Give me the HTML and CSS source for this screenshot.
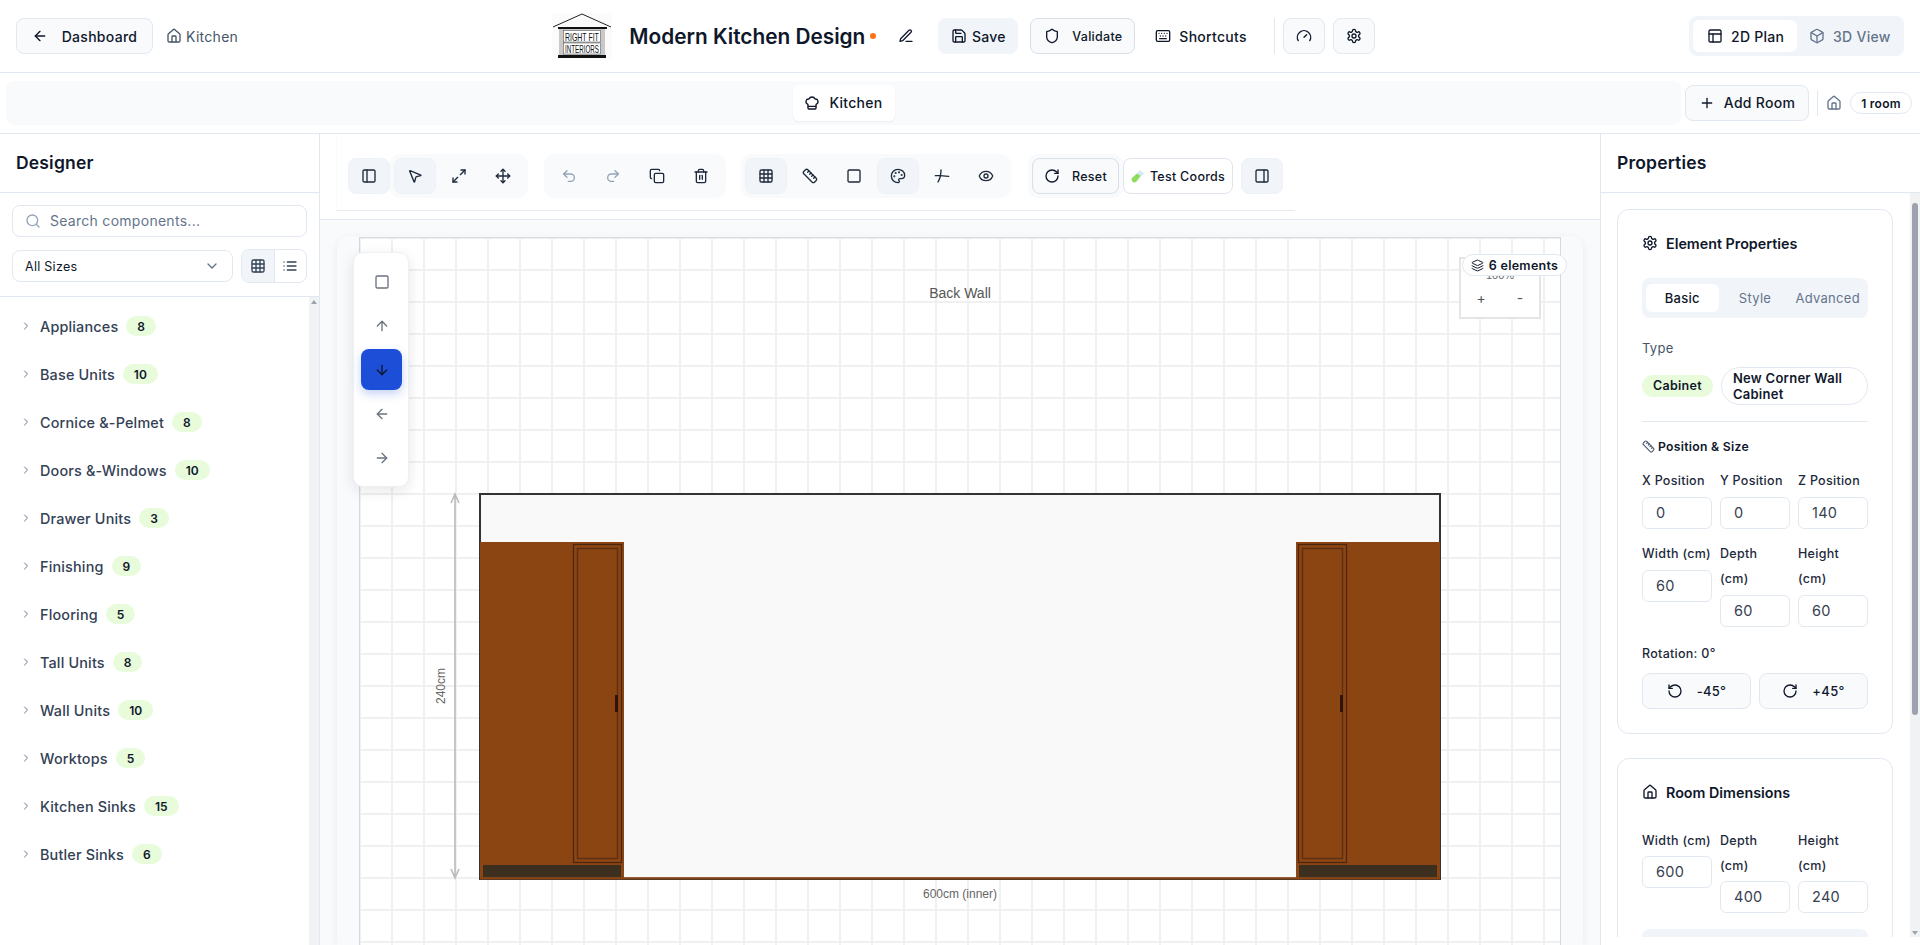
FILE: index.html
```html
<!DOCTYPE html>
<html lang="en">
<head>
  <meta charset="UTF-8">
  <title>Modern Kitchen Design</title>
  <meta name="viewport" content="width=device-width, initial-scale=1.0">
  <link rel="stylesheet" href="styles.css">
</head>
<body>

  <!-- icon sprite -->
  <svg class="sprite" xmlns="http://www.w3.org/2000/svg">
    <symbol id="i-arrow-left" viewBox="0 0 24 24"><path d="m12 19-7-7 7-7"/><path d="M19 12H5"/></symbol>
    <symbol id="i-arrow-right" viewBox="0 0 24 24"><path d="M5 12h14"/><path d="m12 5 7 7-7 7"/></symbol>
    <symbol id="i-arrow-up" viewBox="0 0 24 24"><path d="m5 12 7-7 7 7"/><path d="M12 19V5"/></symbol>
    <symbol id="i-arrow-down" viewBox="0 0 24 24"><path d="M12 5v14"/><path d="m19 12-7 7-7-7"/></symbol>
    <symbol id="i-home" viewBox="0 0 24 24"><path d="M15 21v-8a1 1 0 0 0-1-1h-4a1 1 0 0 0-1 1v8"/><path d="M3 10a2 2 0 0 1 .709-1.528l7-5.999a2 2 0 0 1 2.582 0l7 5.999A2 2 0 0 1 21 10v9a2 2 0 0 1-2 2H5a2 2 0 0 1-2-2z"/></symbol>
    <symbol id="i-pen" viewBox="0 0 24 24"><path d="M12 20h9"/><path d="M16.5 3.5a2.12 2.12 0 0 1 3 3L7 19l-4 1 1-4Z"/></symbol>
    <symbol id="i-save" viewBox="0 0 24 24"><path d="M15.2 3a2 2 0 0 1 1.4.6l3.8 3.8a2 2 0 0 1 .6 1.4V19a2 2 0 0 1-2 2H5a2 2 0 0 1-2-2V5a2 2 0 0 1 2-2z"/><path d="M17 21v-7a1 1 0 0 0-1-1H8a1 1 0 0 0-1 1v7"/><path d="M7 3v4a1 1 0 0 0 1 1h7"/></symbol>
    <symbol id="i-shield" viewBox="0 0 24 24"><path d="M20 13c0 5-3.5 7.5-7.66 8.95a1 1 0 0 1-.67-.01C7.5 20.5 4 18 4 13V6a1 1 0 0 1 1-1c2 0 4.5-1.2 6.24-2.72a1.17 1.17 0 0 1 1.52 0C14.51 3.81 17 5 19 5a1 1 0 0 1 1 1z"/></symbol>
    <symbol id="i-keyboard" viewBox="0 0 24 24"><rect x="2" y="4" width="20" height="16" rx="2"/><path d="M6 8h.01M10 8h.01M14 8h.01M18 8h.01M8 12h.01M12 12h.01M16 12h.01M7 16h10"/></symbol>
    <symbol id="i-gauge" viewBox="0 0 24 24"><path d="m12 14 4-4"/><path d="M3.34 19a10 10 0 1 1 17.32 0"/></symbol>
    <symbol id="i-settings" viewBox="0 0 24 24"><path d="M12.22 2h-.44a2 2 0 0 0-2 2v.18a2 2 0 0 1-1 1.73l-.43.25a2 2 0 0 1-2 0l-.15-.08a2 2 0 0 0-2.73.73l-.22.38a2 2 0 0 0 .73 2.73l.15.1a2 2 0 0 1 1 1.72v.51a2 2 0 0 1-1 1.74l-.15.09a2 2 0 0 0-.73 2.73l.22.38a2 2 0 0 0 2.73.73l.15-.08a2 2 0 0 1 2 0l.43.25a2 2 0 0 1 1 1.73V20a2 2 0 0 0 2 2h.44a2 2 0 0 0 2-2v-.18a2 2 0 0 1 1-1.73l.43-.25a2 2 0 0 1 2 0l.15.08a2 2 0 0 0 2.73-.73l.22-.39a2 2 0 0 0-.73-2.73l-.15-.08a2 2 0 0 1-1-1.74v-.5a2 2 0 0 1 1-1.74l.15-.09a2 2 0 0 0 .73-2.73l-.22-.38a2 2 0 0 0-2.73-.73l-.15.08a2 2 0 0 1-2 0l-.43-.25a2 2 0 0 1-1-1.73V4a2 2 0 0 0-2-2z"/><circle cx="12" cy="12" r="3"/></symbol>
    <symbol id="i-layout" viewBox="0 0 24 24"><rect x="3" y="3" width="18" height="18" rx="2"/><path d="M3 9h18"/><path d="M9 21V9"/></symbol>
    <symbol id="i-box" viewBox="0 0 24 24"><path d="M21 8a2 2 0 0 0-1-1.73l-7-4a2 2 0 0 0-2 0l-7 4A2 2 0 0 0 3 8v8a2 2 0 0 0 1 1.73l7 4a2 2 0 0 0 2 0l7-4A2 2 0 0 0 21 16Z"/><path d="m3.3 7 8.7 5 8.7-5"/><path d="M12 22V12"/></symbol>
    <symbol id="i-chef" viewBox="0 0 24 24"><path d="M17 21a1 1 0 0 0 1-1v-5.35c0-.457.316-.844.727-1.041a4 4 0 0 0-2.134-7.589 5 5 0 0 0-9.186 0 4 4 0 0 0-2.134 7.588c.411.198.727.585.727 1.041V20a1 1 0 0 0 1 1Z"/><path d="M6 17h12"/></symbol>
    <symbol id="i-plus" viewBox="0 0 24 24"><path d="M5 12h14"/><path d="M12 5v14"/></symbol>
    <symbol id="i-panel-left" viewBox="0 0 24 24"><rect x="3" y="3" width="18" height="18" rx="2"/><path d="M9 3v18"/></symbol>
    <symbol id="i-panel-right" viewBox="0 0 24 24"><rect x="3" y="3" width="18" height="18" rx="2"/><path d="M15 3v18"/></symbol>
    <symbol id="i-pointer" viewBox="0 0 24 24"><path d="M4.037 4.688a.495.495 0 0 1 .651-.651l16 6.5a.5.5 0 0 1-.063.947l-6.124 1.58a2 2 0 0 0-1.438 1.435l-1.579 6.126a.5.5 0 0 1-.947.063z"/></symbol>
    <symbol id="i-expand" viewBox="0 0 24 24"><path d="M15 3h6v6"/><path d="m21 3-7 7"/><path d="m3 21 7-7"/><path d="M9 21H3v-6"/></symbol>
    <symbol id="i-move" viewBox="0 0 24 24"><path d="M12 2v20"/><path d="m15 19-3 3-3-3"/><path d="m19 9 3 3-3 3"/><path d="M2 12h20"/><path d="m5 9-3 3 3 3"/><path d="m9 5 3-3 3 3"/></symbol>
    <symbol id="i-undo" viewBox="0 0 24 24"><path d="M9 14 4 9l5-5"/><path d="M4 9h10.5a5.5 5.5 0 0 1 0 11H11"/></symbol>
    <symbol id="i-redo" viewBox="0 0 24 24"><path d="m15 14 5-5-5-5"/><path d="M20 9H9.5a5.5 5.5 0 0 0 0 11H13"/></symbol>
    <symbol id="i-copy" viewBox="0 0 24 24"><rect x="8" y="8" width="14" height="14" rx="2"/><path d="M4 16c-1.1 0-2-.9-2-2V4c0-1.1.9-2 2-2h10c1.1 0 2 .9 2 2"/></symbol>
    <symbol id="i-trash" viewBox="0 0 24 24"><path d="M3 6h18"/><path d="M19 6v14c0 1-1 2-2 2H7c-1 0-2-1-2-2V6"/><path d="M8 6V4c0-1 1-2 2-2h4c1 0 2 1 2 2v2"/><path d="M10 11v6"/><path d="M14 11v6"/></symbol>
    <symbol id="i-grid" viewBox="0 0 24 24"><rect x="3" y="3" width="18" height="18" rx="2"/><path d="M3 9h18M3 15h18M9 3v18M15 3v18"/></symbol>
    <symbol id="i-ruler" viewBox="0 0 24 24"><path d="M21.3 15.3a2.4 2.4 0 0 1 0 3.4l-2.6 2.6a2.4 2.4 0 0 1-3.4 0L2.7 8.7a2.41 2.41 0 0 1 0-3.4l2.6-2.6a2.41 2.41 0 0 1 3.4 0Z"/><path d="m14.5 12.5 2-2"/><path d="m11.5 9.5 2-2"/><path d="m8.5 6.5 2-2"/><path d="m17.5 15.5 2-2"/></symbol>
    <symbol id="i-square" viewBox="0 0 24 24"><rect x="3" y="3" width="18" height="18" rx="2"/></symbol>
    <symbol id="i-palette" viewBox="0 0 24 24"><path d="M12 22a1 1 0 0 1 0-20 10 9 0 0 1 10 9 5 5 0 0 1-5 5h-2.25a1.75 1.75 0 0 0-1.4 2.8l.3.4a1.75 1.75 0 0 1-1.4 2.8z"/><circle cx="13.5" cy="6.5" r=".6"/><circle cx="17.5" cy="10.5" r=".6"/><circle cx="6.5" cy="12.5" r=".6"/><circle cx="8.5" cy="7.5" r=".6"/></symbol>
    <symbol id="i-angle" viewBox="0 0 24 24"><path d="M2 11.5h7"/><path d="M9 11.5 22 12.5"/><path d="M10.5 3c0 7-1.5 13-4.5 18"/></symbol>
    <symbol id="i-eye" viewBox="0 0 24 24"><path d="M2.062 12.348a1 1 0 0 1 0-.696 10.75 10.75 0 0 1 19.876 0 1 1 0 0 1 0 .696 10.75 10.75 0 0 1-19.876 0"/><circle cx="12" cy="12" r="3"/></symbol>
    <symbol id="i-rotate-cw" viewBox="0 0 24 24"><path d="M21 12a9 9 0 1 1-9-9c2.52 0 4.93 1 6.74 2.74L21 8"/><path d="M21 3v5h-5"/></symbol>
    <symbol id="i-rotate-ccw" viewBox="0 0 24 24"><path d="M3 12a9 9 0 1 0 9-9 9.75 9.75 0 0 0-6.74 2.74L3 8"/><path d="M3 3v5h5"/></symbol>
    <symbol id="i-search" viewBox="0 0 24 24"><circle cx="11" cy="11" r="8"/><path d="m21 21-4.3-4.3"/></symbol>
    <symbol id="i-chevron-down" viewBox="0 0 24 24"><path d="m6 9 6 6 6-6"/></symbol>
    <symbol id="i-chevron-right" viewBox="0 0 24 24"><path d="m9 18 6-6-6-6"/></symbol>
    <symbol id="i-list" viewBox="0 0 24 24"><path d="M3 6h.01M3 12h.01M3 18h.01M8 6h13M8 12h13M8 18h13"/></symbol>
    <symbol id="i-layers" viewBox="0 0 24 24"><path d="M12.83 2.18a2 2 0 0 0-1.66 0L2.6 6.08a1 1 0 0 0 0 1.83l8.58 3.91a2 2 0 0 0 1.66 0l8.58-3.9a1 1 0 0 0 0-1.83z"/><path d="M2 12a1 1 0 0 0 .58.91l8.6 3.91a2 2 0 0 0 1.65 0l8.58-3.9A1 1 0 0 0 22 12"/><path d="M2 17a1 1 0 0 0 .58.91l8.6 3.91a2 2 0 0 0 1.65 0l8.58-3.9A1 1 0 0 0 22 17"/></symbol>
  </svg>

  <header class="topbar">
    <div class="top-left">
      <button class="btn btn-back"><svg class="icon"><use href="#i-arrow-left"/></svg><span>Dashboard</span></button>
      <span class="crumb"><svg class="icon"><use href="#i-home"/></svg>Kitchen</span>
    </div>

    <div class="top-center">
      <svg class="logo" viewBox="552 12 60 46" xmlns="http://www.w3.org/2000/svg">
        <rect x="552" y="12" width="60" height="46" fill="#fbfbfb"/>
        <path d="M553 26 582 13 611 26" fill="none" stroke="#222" stroke-width="1"/>
        <rect x="558" y="26" width="49" height="2" fill="#111"/>
        <rect x="559" y="28" width="46" height="26" fill="#c9c9c9"/>
        <rect x="563.5" y="29.5" width="37" height="11.5" fill="#fff" stroke="#444" stroke-width=".5"/>
        <rect x="563.5" y="42" width="37" height="11" fill="#fff" stroke="#444" stroke-width=".5"/>
        <text class="logo-text" transform="translate(565 39.5) scale(.87 1.45)">RIGHT FIT</text>
        <text class="logo-text" transform="translate(565 52) scale(.78 1.45)">INTERIORS</text>
        <rect x="558" y="54" width="48" height="3" fill="#111"/>
      </svg>
      <h1 class="doc-title">Modern Kitchen Design</h1>
      <span class="dot"></span>
      <button class="btn-plain btn-edit"><svg class="icon"><use href="#i-pen"/></svg></button>
      <button class="btn btn-save"><svg class="icon"><use href="#i-save"/></svg>Save</button>
      <button class="btn btn-validate"><svg class="icon"><use href="#i-shield"/></svg>Validate</button>
      <button class="btn-plain btn-shortcuts"><svg class="icon"><use href="#i-keyboard"/></svg>Shortcuts</button>
      <span class="top-divider"></span>
      <button class="btn btn-square"><svg class="icon"><use href="#i-gauge"/></svg></button>
      <button class="btn btn-square"><svg class="icon"><use href="#i-settings"/></svg></button>
    </div>

    <div class="view-toggle">
      <button class="view-tab active"><svg class="icon"><use href="#i-layout"/></svg>2D Plan</button>
      <button class="view-tab"><svg class="icon"><use href="#i-box"/></svg>3D View</button>
    </div>
  </header>

  <div class="roombar">
    <div class="room-strip">
      <div class="room-tab"><svg class="icon"><use href="#i-chef"/></svg>Kitchen</div>
    </div>
    <button class="btn btn-add"><svg class="icon"><use href="#i-plus"/></svg>Add Room</button>
    <span class="room-divider"></span>
    <svg class="icon room-home"><use href="#i-home"/></svg>
    <span class="room-count">1 room</span>
  </div>

  <main class="workspace">
    <aside class="designer">
      <h2 class="panel-title">Designer</h2>
      <div class="filters">
        <div class="search"><svg class="icon"><use href="#i-search"/></svg><span>Search components...</span></div>
        <div class="filter-row">
          <div class="size-select">All Sizes<svg class="icon"><use href="#i-chevron-down"/></svg></div>
          <div class="list-toggle">
            <span class="active"><svg class="icon"><use href="#i-grid"/></svg></span>
            <span><svg class="icon"><use href="#i-list"/></svg></span>
          </div>
        </div>
      </div>
      <div class="category-wrap">
        <ul class="categories">
          <li><svg class="icon"><use href="#i-chevron-right"/></svg>Appliances<span class="count">8</span></li>
          <li><svg class="icon"><use href="#i-chevron-right"/></svg>Base Units<span class="count">10</span></li>
          <li><svg class="icon"><use href="#i-chevron-right"/></svg>Cornice &amp;-Pelmet<span class="count">8</span></li>
          <li><svg class="icon"><use href="#i-chevron-right"/></svg>Doors &amp;-Windows<span class="count">10</span></li>
          <li><svg class="icon"><use href="#i-chevron-right"/></svg>Drawer Units<span class="count">3</span></li>
          <li><svg class="icon"><use href="#i-chevron-right"/></svg>Finishing<span class="count">9</span></li>
          <li><svg class="icon"><use href="#i-chevron-right"/></svg>Flooring<span class="count">5</span></li>
          <li><svg class="icon"><use href="#i-chevron-right"/></svg>Tall Units<span class="count">8</span></li>
          <li><svg class="icon"><use href="#i-chevron-right"/></svg>Wall Units<span class="count">10</span></li>
          <li><svg class="icon"><use href="#i-chevron-right"/></svg>Worktops<span class="count">5</span></li>
          <li><svg class="icon"><use href="#i-chevron-right"/></svg>Kitchen Sinks<span class="count">15</span></li>
          <li><svg class="icon"><use href="#i-chevron-right"/></svg>Butler Sinks<span class="count">6</span></li>
        </ul>
        <div class="scrolltrack"><span class="arrow-up"></span></div>
      </div>
    </aside>

    <section class="stage">
      <div class="toolbar-wrap">
        <div class="toolbar">
          <button class="tool active"><svg class="icon"><use href="#i-panel-left"/></svg></button>
          <div class="tool-group">
            <button class="tool active"><svg class="icon"><use href="#i-pointer"/></svg></button>
            <button class="tool"><svg class="icon"><use href="#i-expand"/></svg></button>
            <button class="tool"><svg class="icon"><use href="#i-move"/></svg></button>
          </div>
          <div class="tool-group group-edit">
            <button class="tool muted"><svg class="icon"><use href="#i-undo"/></svg></button>
            <button class="tool muted"><svg class="icon"><use href="#i-redo"/></svg></button>
            <button class="tool"><svg class="icon"><use href="#i-copy"/></svg></button>
            <button class="tool"><svg class="icon"><use href="#i-trash"/></svg></button>
          </div>
          <div class="tool-group group-view">
            <button class="tool active"><svg class="icon"><use href="#i-grid"/></svg></button>
            <button class="tool"><svg class="icon"><use href="#i-ruler"/></svg></button>
            <button class="tool"><svg class="icon"><use href="#i-square"/></svg></button>
            <button class="tool active"><svg class="icon"><use href="#i-palette"/></svg></button>
            <button class="tool"><svg class="icon"><use href="#i-angle"/></svg></button>
            <button class="tool"><svg class="icon"><use href="#i-eye"/></svg></button>
          </div>
          <div class="tool-group group-reset">
            <button class="btn btn-reset"><svg class="icon"><use href="#i-rotate-cw"/></svg>Reset</button>
          </div>
          <button class="btn btn-test">
            <svg class="tube" viewBox="0 0 16 16" xmlns="http://www.w3.org/2000/svg">
              <path d="M10.5 1 15 5.5 6 14.5a3.2 3.2 0 0 1-4.5-4.5z" fill="#d5ecf4"/>
              <path d="M6.5 5.5 11 7.5 6 14.5a3.2 3.2 0 0 1-4.5-4.5z" fill="#8fdc5a"/>
            </svg>Test Coords</button>
          <button class="tool active panel-right"><svg class="icon"><use href="#i-panel-right"/></svg></button>
        </div>
      </div>

      <div class="stage-body">
        <div class="canvas-card">
          <div class="canvas">
            <svg class="drawing" viewBox="360 238 1200 707" xmlns="http://www.w3.org/2000/svg">
              <text class="wall-label" x="960" y="298" text-anchor="middle">Back Wall</text>

              <rect x="480" y="494" width="960" height="385" fill="#f9f9f9" stroke="#333" stroke-width="2"/>

              <!-- left tall unit -->
              <rect x="480" y="542" width="144" height="337" fill="#8b4513"/>
              <rect x="573.5" y="544.5" width="48" height="318" fill="none" stroke="#4a2510" stroke-width="1.2"/>
              <rect x="577.5" y="548.5" width="40" height="310" fill="none" stroke="#5c2e12" stroke-width="1.4"/>
              <rect x="615" y="695" width="3" height="17" fill="#2e1508"/>
              <rect x="483" y="865" width="138" height="13" fill="#3c2f1f"/>

              <!-- right tall unit -->
              <rect x="1296" y="542" width="144" height="337" fill="#8b4513"/>
              <rect x="1298.5" y="544.5" width="48" height="318" fill="none" stroke="#4a2510" stroke-width="1.2"/>
              <rect x="1302.5" y="548.5" width="40" height="310" fill="none" stroke="#5c2e12" stroke-width="1.4"/>
              <rect x="1340" y="695" width="3" height="17" fill="#2e1508"/>
              <rect x="1299" y="865" width="138" height="13" fill="#3c2f1f"/>

              <rect x="480" y="877" width="960" height="2.5" fill="#8b4513" opacity=".85"/>

              <!-- dimensions -->
              <path d="M455 495V877M451 503l4-9 4 9M451 869l4 9 4-9" fill="none" stroke="#bbb" stroke-width="1.6"/>
              <text class="dim-label" transform="rotate(-90 445 686)" x="445" y="686" text-anchor="middle">240cm</text>
              <text class="dim-label" x="960" y="898" text-anchor="middle">600cm (inner)</text>
            </svg>

            <div class="float-tools">
              <button class="float-btn"><svg class="icon"><use href="#i-square"/></svg></button>
              <button class="float-btn"><svg class="icon"><use href="#i-arrow-up"/></svg></button>
              <button class="float-btn active"><svg class="icon"><use href="#i-arrow-down"/></svg></button>
              <button class="float-btn"><svg class="icon"><use href="#i-arrow-left"/></svg></button>
              <button class="float-btn"><svg class="icon"><use href="#i-arrow-right"/></svg></button>
            </div>

            <div class="zoom-box">
              <span class="zoom-pct">100%</span>
              <div class="zoom-btns"><span>+</span><span>-</span></div>
            </div>
            <div class="element-count"><svg class="icon"><use href="#i-layers"/></svg>6 elements</div>
          </div>
        </div>
      </div>
    </section>

    <aside class="properties">
      <h2 class="panel-title">Properties</h2>
      <div class="props-wrap">
        <div class="props-scroll">
          <section class="card">
            <h3 class="card-title"><svg class="icon"><use href="#i-settings"/></svg>Element Properties</h3>
            <div class="prop-tabs">
              <span class="active">Basic</span>
              <span>Style</span>
              <span>Advanced</span>
            </div>
            <div class="type-label">Type</div>
            <div class="type-row">
              <span class="pill-green">Cabinet</span>
              <span class="pill-name">New Corner Wall Cabinet</span>
            </div>
            <hr class="rule">
            <h4 class="sub-title"><svg class="icon"><use href="#i-ruler"/></svg>Position &amp; Size</h4>
            <div class="field-grid">
              <label class="field"><span>X Position</span><div class="input">0</div></label>
              <label class="field"><span>Y Position</span><div class="input">0</div></label>
              <label class="field"><span>Z Position</span><div class="input">140</div></label>
              <label class="field"><span>Width (cm)</span><div class="input">60</div></label>
              <label class="field"><span>Depth<br>(cm)</span><div class="input">60</div></label>
              <label class="field"><span>Height<br>(cm)</span><div class="input">60</div></label>
            </div>
            <div class="rotation-label">Rotation: 0°</div>
            <div class="rotation-row">
              <button class="btn btn-rotate"><svg class="icon"><use href="#i-rotate-ccw"/></svg>-45°</button>
              <button class="btn btn-rotate"><svg class="icon"><use href="#i-rotate-cw"/></svg>+45°</button>
            </div>
          </section>

          <section class="card card-room">
            <h3 class="card-title"><svg class="icon"><use href="#i-home"/></svg>Room Dimensions</h3>
            <div class="field-grid room-grid">
              <label class="field"><span>Width (cm)</span><div class="input">600</div></label>
              <label class="field"><span>Depth<br>(cm)</span><div class="input">400</div></label>
              <label class="field"><span>Height<br>(cm)</span><div class="input">240</div></label>
            </div>
            <div class="room-footer"></div>
          </section>
        </div>
        <div class="scrolltrack props-track">
          <span class="thumb"></span>
          <span class="arrow-down"></span>
        </div>
      </div>
    </aside>
  </main>

</body>
</html>
```

FILE: styles.css
```css
* {
  box-sizing: border-box;
}

html, body {
  margin: 0;
  height: 945px;
  overflow: hidden;
}

body {
  display: flex;
  flex-direction: column;
  background-color: white;
  color: #0f172a;
  font-family: Inter, "Noto Sans", sans-serif;
  font-size: 14px;
  letter-spacing: 0.02em;
}

button {
  font: inherit;
  letter-spacing: inherit;
  color: inherit;
  cursor: pointer;
}

h1, h2, h3, h4, ul {
  margin: 0;
  padding: 0;
}

.sprite {
  display: none;
}

.icon {
  width: 16px;
  height: 16px;
  flex: none;
  fill: none;
  stroke: currentColor;
  stroke-width: 2;
  stroke-linecap: round;
  stroke-linejoin: round;
}

.btn {
  display: inline-flex;
  align-items: center;
  justify-content: center;
  height: 36px;
  padding: 0;
  background-color: #f8fafc;
  border: 1px solid #e2e8f0;
  border-radius: 8px;
  font-weight: 500;
}

.btn-plain {
  display: inline-flex;
  align-items: center;
  height: 36px;
  padding: 0;
  background: none;
  border: none;
  font-weight: 500;
}

/* top bar */
.topbar {
  flex: none;
  display: flex;
  align-items: center;
  justify-content: space-between;
  height: 73px;
  padding: 0 16px;
  border-bottom: 1px solid #e2e8f0;
}

.top-left, .top-center {
  display: flex;
  align-items: center;
}

.btn-back {
  width: 137px;
  gap: 14px;
}

.crumb {
  display: flex;
  align-items: center;
  gap: 4px;
  margin-left: 13px;
  color: #475569;
}

.logo {
  width: 60px;
  height: 46px;
}

.logo-text {
  font-family: "Liberation Sans", sans-serif;
  font-size: 8px;
  letter-spacing: 0;
  fill: #111;
}

.doc-title {
  margin-left: 17px;
  font-size: 20.8px;
  font-weight: 600;
  letter-spacing: 0;
  white-space: nowrap;
}

.dot {
  width: 6px;
  height: 6px;
  margin-left: 5px;
  border-radius: 50%;
  background-color: #f97316;
}

.btn-edit {
  margin-left: 22px;
}

.btn-save {
  width: 80px;
  gap: 5px;
  margin-left: 24px;
  background-color: #f1f5f9;
  border-color: #f1f5f9;
}

.btn-validate {
  width: 105px;
  justify-content: flex-start;
  gap: 12px;
  margin-left: 12px;
  padding-left: 13px;
  font-size: 12.5px;
  border-color: #d8dfe9;
}

.btn-shortcuts {
  gap: 8px;
  margin-left: 20px;
}

.top-divider {
  width: 1px;
  height: 36px;
  margin: 0 8px 0 27px;
  background-color: #e2e8f0;
}

.btn-square {
  width: 42px;
  margin-right: 8px;
}

.btn-square:last-child {
  margin-right: 0;
}

.view-toggle {
  display: flex;
  width: 215px;
  height: 40px;
  padding: 4px;
  background-color: #f1f5f9;
  border-radius: 8px;
}

.view-tab {
  display: flex;
  align-items: center;
  gap: 8px;
  padding: 0 0 0 12px;
  background: none;
  border: none;
  border-radius: 6px;
  color: #64748b;
  font-weight: 500;
  flex: 1;
}

.view-tab.active {
  flex: none;
  width: 104px;
  padding-left: 14px;
  background-color: white;
  color: #0f172a;
}

/* room bar */
.roombar {
  flex: none;
  display: flex;
  align-items: center;
  height: 61px;
  padding: 0 8px 0 6px;
  border-bottom: 1px solid #e2e8f0;
}

.room-strip {
  flex: 1;
  display: flex;
  align-items: center;
  justify-content: center;
  height: 44px;
  background-color: #f8fafc;
  border-radius: 8px;
}

.room-tab {
  display: flex;
  align-items: center;
  justify-content: center;
  gap: 9px;
  width: 102px;
  height: 36px;
  padding-bottom: 1px;
  background-color: white;
  border-radius: 6px;
  box-shadow: 0 1px 2px rgba(15, 23, 42, 0.05);
  font-weight: 500;
}

.btn-add {
  width: 124px;
  gap: 9px;
  margin-left: 4px;
  padding-bottom: 1px;
}

.room-divider {
  width: 1px;
  height: 26px;
  margin: 0 8px;
  background-color: #e2e8f0;
}

.room-home {
  color: #64748b;
}

.room-count {
  display: flex;
  align-items: center;
  justify-content: center;
  width: 62px;
  height: 22px;
  margin-left: 8px;
  background-color: white;
  border: 1px solid #e2e8f0;
  border-radius: 11px;
  font-size: 12px;
  font-weight: 600;
}

/* main area */
.workspace {
  flex: 1;
  display: flex;
  min-height: 0;
}

.panel-title {
  height: 59px;
  flex: none;
  padding-top: 18px;
  font-size: 17.5px;
  line-height: 22px;
  font-weight: 600;
  letter-spacing: 0.01em;
  border-bottom: 1px solid #e2e8f0;
}

.designer {
  flex: none;
  display: flex;
  flex-direction: column;
  width: 320px;
  border-right: 1px solid #e2e8f0;
}

.designer .panel-title {
  padding-left: 16px;
}

.filters {
  flex: none;
  height: 104px;
  padding: 12px 12px 0;
  border-bottom: 1px solid #e2e8f0;
}

.search {
  display: flex;
  align-items: center;
  gap: 9px;
  height: 32px;
  padding-left: 12px;
  border: 1px solid #e2e8f0;
  border-radius: 8px;
  color: #64748b;
  font-size: 14px;
}

.search span {
  margin-top: -2px;
}

.search .icon {
  color: #94a3b8;
}

.filter-row {
  display: flex;
  align-items: center;
  gap: 8px;
  margin-top: 12px;
}

.size-select {
  flex: 1;
  display: flex;
  align-items: center;
  justify-content: space-between;
  height: 32px;
  padding: 0 12px;
  border: 1px solid #e2e8f0;
  border-radius: 8px;
  font-size: 12.5px;
}

.size-select .icon {
  color: #64748b;
}

.list-toggle {
  display: flex;
  width: 66px;
  height: 34px;
  border: 1px solid #e2e8f0;
  border-radius: 8px;
  overflow: hidden;
}

.list-toggle span {
  flex: 1;
  display: flex;
  align-items: center;
  justify-content: center;
  color: #334155;
}

.list-toggle .active {
  background-color: #f1f5f9;
  border-right: 1px solid #e2e8f0;
}

.category-wrap {
  flex: 1;
  display: flex;
  min-height: 0;
}

.categories {
  flex: 1;
  padding-top: 5px;
  list-style: none;
}

.categories li {
  display: flex;
  align-items: center;
  height: 48px;
  padding-left: 20px;
  color: #334155;
  font-size: 14.4px;
  font-weight: 500;
  letter-spacing: 0.012em;
}

.categories .icon {
  width: 12px;
  height: 12px;
  margin-right: 8px;
  color: #64748b;
}

.count {
  display: flex;
  align-items: center;
  height: 20px;
  margin-left: 8px;
  padding: 0 11px;
  background-color: #e8fcdc;
  border-radius: 10px;
  color: #0f172a;
  font-size: 12px;
  font-weight: 600;
  letter-spacing: 0;
}

.scrolltrack {
  position: relative;
  flex: none;
  width: 10px;
  background-color: #f1f2f4;
}

.arrow-up {
  position: absolute;
  top: 3px;
  left: 2px;
  border: 3px solid transparent;
  border-top: 0;
  border-bottom: 4px solid #9ca3af;
}

.arrow-down {
  position: absolute;
  bottom: 2px;
  left: 2px;
  border: 3px solid transparent;
  border-bottom: 0;
  border-top: 4px solid #9ca3af;
}

/* centre */
.stage {
  flex: 1;
  display: flex;
  flex-direction: column;
  min-width: 0;
}

.toolbar-wrap {
  flex: none;
  height: 86px;
  padding-left: 16px;
  border-bottom: 1px solid #e2e8f0;
}

.toolbar {
  display: flex;
  align-items: center;
  width: 959px;
  height: 77px;
  padding: 8px 0 0 11px;
  border-left: 1px solid #f8fafc;
  border-bottom: 1px solid #e6eaf0;
}

.tool-group {
  display: flex;
  gap: 2px;
  height: 44px;
  padding: 4px;
  margin-right: 16px;
  background-color: #f8fafc;
  border-radius: 10px;
}

.group-edit {
  margin-right: 15px;
}

.group-view {
  margin-right: 17px;
}

.tool {
  display: flex;
  align-items: center;
  justify-content: center;
  width: 42px;
  height: 36px;
  padding: 0;
  background: none;
  border: 1px solid transparent;
  border-radius: 8px;
  color: #1e293b;
}

.tool.active {
  background-color: #f1f5f9;
  border-color: #eef2f6;
}

.tool.muted {
  color: #94a3b8;
}

.group-reset {
  margin-right: 0;
  padding-right: 4px;
}

.btn-reset {
  width: 87px;
  gap: 12px;
  font-size: 12.5px;
  border-color: #d8dfe9;
}

.btn-test {
  width: 110px;
  gap: 5px;
  background-color: white;
  font-size: 12.5px;
  border-color: #dfe4ec;
}

.tube {
  width: 14px;
  height: 14px;
}

.panel-right {
  margin-left: 8px;
}

.stage-body {
  flex: 1;
  display: flex;
  min-height: 0;
  padding: 16px 17px 0 17px;
  background-color: #f8fafc;
}

.canvas-card {
  flex: 1;
  display: flex;
  padding: 1px 22px 0;
  background-color: #f8fafc;
  border-radius: 12px 12px 0 0;
  box-shadow: 0 2px 8px rgba(15, 23, 42, 0.06);
}

.canvas {
  position: relative;
  flex: 1;
  background-color: white;
  border-top: 1px solid #d3d8e2;
  border-left: 1px solid #d3d8e2;
  border-right: 1px solid #d3d8e2;
  background-image:
    linear-gradient(to right, #f0f0f0 2px, transparent 2px),
    linear-gradient(to bottom, #f0f0f0 2px, transparent 2px);
  background-size: 32px 32px;
  background-position: 31px 31px;
}

.drawing {
  display: block;
  width: 1200px;
  height: 707px;
}

.wall-label {
  font-family: "Liberation Sans", sans-serif;
  font-size: 14px;
  letter-spacing: 0;
  fill: #555;
}

.dim-label {
  font-family: "Liberation Sans", sans-serif;
  font-size: 12px;
  letter-spacing: 0;
  fill: #666;
}

.float-tools {
  position: absolute;
  left: -7px;
  top: 14px;
  display: flex;
  flex-direction: column;
  gap: 3px;
  width: 56px;
  padding: 8px 7px;
  background-color: white;
  border: 1px solid #eef0f4;
  border-radius: 10px;
  box-shadow: 0 4px 14px rgba(15, 23, 42, 0.1);
}

.float-btn {
  display: flex;
  align-items: center;
  justify-content: center;
  width: 41px;
  height: 41px;
  padding: 0;
  background: none;
  border: none;
  border-radius: 8px;
  color: #6b7280;
}

.float-btn.active {
  background-color: #1d4ed8;
  color: #0f172a;
  box-shadow: 0 4px 10px rgba(29, 78, 216, 0.25);
}

.zoom-box {
  position: absolute;
  left: 1099px;
  top: 19px;
  width: 82px;
  height: 62px;
  background-color: white;
  border: 2px solid #e5e5e5;
  text-align: center;
}

.zoom-pct {
  display: block;
  margin-top: 10px;
  font-family: "Liberation Sans", sans-serif;
  font-size: 11px;
  letter-spacing: 0;
  color: #666;
}

.zoom-btns {
  display: flex;
  justify-content: space-around;
  margin-top: 8px;
  color: #555;
  font-size: 14px;
}

.element-count {
  position: absolute;
  left: 1102px;
  top: 16px;
  display: flex;
  align-items: center;
  justify-content: center;
  gap: 5px;
  width: 105px;
  height: 22px;
  background-color: white;
  border: 1px solid #e2e8f0;
  border-radius: 11px;
  font-size: 12.5px;
  font-weight: 600;
}

.element-count .icon {
  width: 13px;
  height: 13px;
  stroke-width: 1.8;
}

/* properties */
.properties {
  flex: none;
  display: flex;
  flex-direction: column;
  width: 320px;
  border-left: 1px solid #e2e8f0;
}

.properties .panel-title {
  padding-left: 16px;
}

.props-wrap {
  display: flex;
  height: 744px;
}

.props-scroll {
  flex: 1;
  padding: 16px 16px 0;
  overflow: hidden;
}

.card {
  padding: 24px;
  background-color: white;
  border: 1px solid #e2e8f0;
  border-radius: 12px;
  width: 276px;
}

.card-room {
  margin-top: 24px;
}

.card-title {
  display: flex;
  align-items: center;
  gap: 8px;
  height: 20px;
  margin-top: -1px;
  font-size: 14.3px;
  font-weight: 600;
  letter-spacing: 0;
}

.prop-tabs {
  display: flex;
  align-items: center;
  height: 40px;
  margin-top: 25px;
  padding: 0 4px;
  background-color: #f1f5f9;
  border-radius: 8px;
  font-size: 13px;
  color: #64748b;
}

.prop-tabs span {
  flex: 1;
  text-align: center;
  line-height: 28px;
}

.prop-tabs .active {
  background-color: white;
  border-radius: 6px;
  color: #0f172a;
  font-weight: 500;
}

.type-label {
  margin-top: 20px;
  font-size: 13px;
  line-height: 20px;
  color: #475569;
}

.type-row {
  display: flex;
  align-items: center;
  gap: 8px;
  margin-top: 9px;
  font-size: 12.5px;
  font-weight: 600;
}

.pill-green {
  flex: none;
  padding: 0 11px;
  line-height: 22px;
  background-color: #e8fcdc;
  border-radius: 11px;
}

.pill-name {
  flex: 1;
  padding: 2px 11px;
  font-size: 13px;
  line-height: 16px;
  border: 1px solid #e2e8f0;
  border-radius: 19px;
}

.rule {
  height: 1px;
  margin: 16px 0 14px;
  border: none;
  background-color: #e2e8f0;
}

.sub-title {
  display: flex;
  align-items: center;
  gap: 3px;
  height: 20px;
  font-size: 12.2px;
  font-weight: 600;
}

.sub-title .icon {
  width: 13px;
  height: 13px;
  color: #475569;
}

.field-grid {
  display: grid;
  grid-template-columns: repeat(3, 1fr);
  gap: 12px 8px;
  margin-top: 12px;
}

.room-grid {
  margin-top: 26px;
}

.field {
  display: block;
}

.field span {
  display: block;
  font-size: 12.5px;
  line-height: 25px;
  white-space: nowrap;
  font-weight: 500;
  color: #1e293b;
}

.input {
  height: 32px;
  margin-top: 4px;
  padding-left: 13px;
  line-height: 29px;
  border: 1px solid #e2e8f0;
  border-radius: 6px;
  color: #374151;
  font-size: 14.5px;
}

.room-grid .input {
  margin-top: 3px;
}

.rotation-label {
  margin-top: 14px;
  font-size: 12.5px;
  line-height: 25px;
  font-weight: 500;
  color: #1e293b;
}

.rotation-row {
  display: flex;
  gap: 8px;
  margin-top: 7px;
}

.btn-rotate {
  flex: 1;
  gap: 14px;
  font-size: 13px;
}

.room-footer {
  height: 40px;
  margin-top: 16px;
  background-color: #f1f5f9;
  border-radius: 8px;
}

.props-track .thumb {
  position: absolute;
  top: 10px;
  left: 2px;
  width: 6px;
  height: 512px;
  background-color: #9ca3af;
  border-radius: 3px;
}
```
